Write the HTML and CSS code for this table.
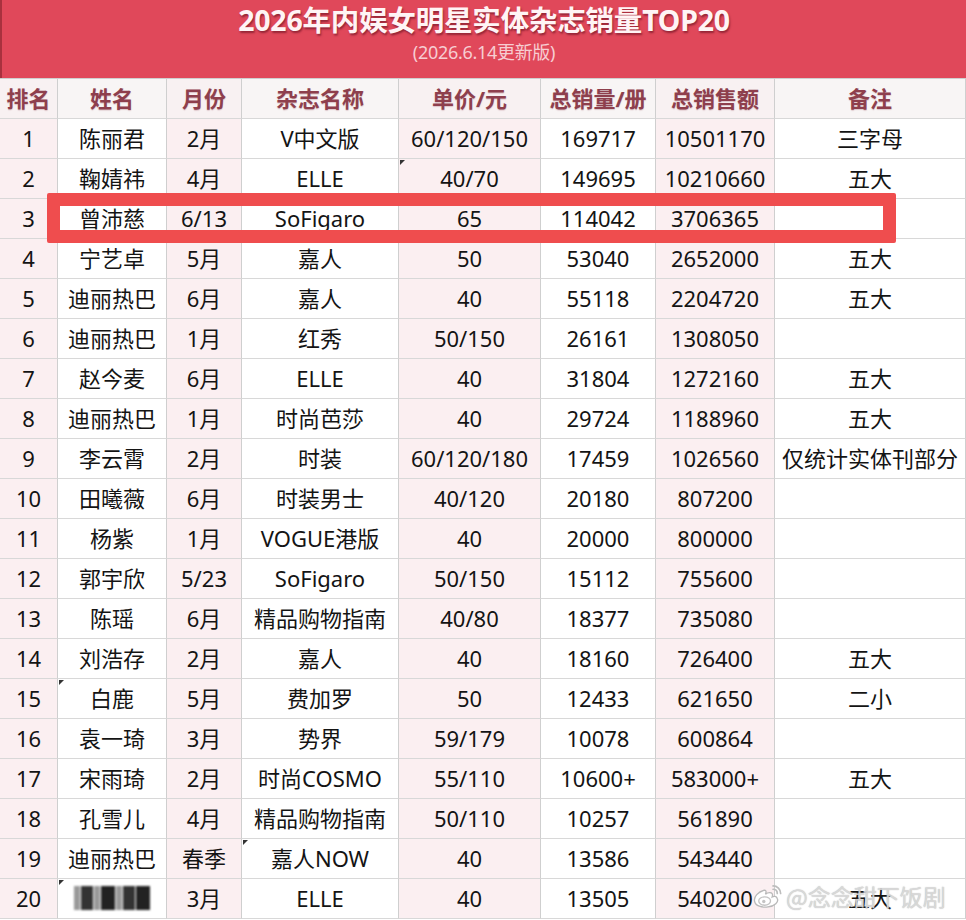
FILE: index.html
```html
<!DOCTYPE html>
<html lang="zh-CN">
<head>
<meta charset="utf-8">
<title>2026年内娱女明星实体杂志销量TOP20</title>
<link rel="stylesheet" href="styles.css">
</head>
<body>
<div class="page">
  <header class="banner">
    <h1 class="title">2026年内娱女明星实体杂志销量TOP20</h1>
    <div class="subtitle">(2026.6.14更新版)</div>
  </header>
  <div class="table">
    <div class="c h t">排名</div><div class="c h">姓名</div><div class="c h t">月份</div><div class="c h">杂志名称</div><div class="c h t">单价/元</div><div class="c h">总销量/册</div><div class="c h t">总销售额</div><div class="c h">备注</div>

    <div class="c t">1</div><div class="c">陈丽君</div><div class="c t">2月</div><div class="c">V中文版</div><div class="c t">60/120/150</div><div class="c">169717</div><div class="c t">10501170</div><div class="c">三字母</div>
    <div class="c t">2</div><div class="c">鞠婧祎</div><div class="c t">4月</div><div class="c">ELLE</div><div class="c t mark">40/70</div><div class="c">149695</div><div class="c t">10210660</div><div class="c">五大</div>
    <div class="c t">3</div><div class="c">曾沛慈</div><div class="c t">6/13</div><div class="c">SoFigaro</div><div class="c t">65</div><div class="c">114042</div><div class="c t">3706365</div><div class="c"></div>
    <div class="c t">4</div><div class="c">宁艺卓</div><div class="c t">5月</div><div class="c">嘉人</div><div class="c t">50</div><div class="c">53040</div><div class="c t">2652000</div><div class="c">五大</div>
    <div class="c t">5</div><div class="c">迪丽热巴</div><div class="c t">6月</div><div class="c">嘉人</div><div class="c t">40</div><div class="c">55118</div><div class="c t">2204720</div><div class="c">五大</div>
    <div class="c t">6</div><div class="c">迪丽热巴</div><div class="c t">1月</div><div class="c">红秀</div><div class="c t">50/150</div><div class="c">26161</div><div class="c t">1308050</div><div class="c"></div>
    <div class="c t">7</div><div class="c">赵今麦</div><div class="c t">6月</div><div class="c">ELLE</div><div class="c t">40</div><div class="c">31804</div><div class="c t">1272160</div><div class="c">五大</div>
    <div class="c t">8</div><div class="c">迪丽热巴</div><div class="c t">1月</div><div class="c">时尚芭莎</div><div class="c t">40</div><div class="c">29724</div><div class="c t">1188960</div><div class="c">五大</div>
    <div class="c t">9</div><div class="c">李云霄</div><div class="c t">2月</div><div class="c">时装</div><div class="c t">60/120/180</div><div class="c">17459</div><div class="c t">1026560</div><div class="c">仅统计实体刊部分</div>
    <div class="c t">10</div><div class="c">田曦薇</div><div class="c t">6月</div><div class="c">时装男士</div><div class="c t">40/120</div><div class="c">20180</div><div class="c t">807200</div><div class="c"></div>
    <div class="c t">11</div><div class="c">杨紫</div><div class="c t">1月</div><div class="c">VOGUE港版</div><div class="c t">40</div><div class="c">20000</div><div class="c t">800000</div><div class="c"></div>
    <div class="c t">12</div><div class="c">郭宇欣</div><div class="c t">5/23</div><div class="c">SoFigaro</div><div class="c t">50/150</div><div class="c">15112</div><div class="c t">755600</div><div class="c"></div>
    <div class="c t">13</div><div class="c">陈瑶</div><div class="c t">6月</div><div class="c">精品购物指南</div><div class="c t">40/80</div><div class="c">18377</div><div class="c t">735080</div><div class="c"></div>
    <div class="c t">14</div><div class="c">刘浩存</div><div class="c t">2月</div><div class="c">嘉人</div><div class="c t">40</div><div class="c">18160</div><div class="c t">726400</div><div class="c">五大</div>
    <div class="c t">15</div><div class="c mark">白鹿</div><div class="c t">5月</div><div class="c">费加罗</div><div class="c t">50</div><div class="c">12433</div><div class="c t">621650</div><div class="c">二小</div>
    <div class="c t">16</div><div class="c">袁一琦</div><div class="c t">3月</div><div class="c">势界</div><div class="c t">59/179</div><div class="c">10078</div><div class="c t">600864</div><div class="c"></div>
    <div class="c t">17</div><div class="c">宋雨琦</div><div class="c t">2月</div><div class="c">时尚COSMO</div><div class="c t">55/110</div><div class="c">10600+</div><div class="c t">583000+</div><div class="c">五大</div>
    <div class="c t">18</div><div class="c">孔雪儿</div><div class="c t">4月</div><div class="c">精品购物指南</div><div class="c t">50/110</div><div class="c">10257</div><div class="c t">561890</div><div class="c"></div>
    <div class="c t">19</div><div class="c">迪丽热巴</div><div class="c t">春季</div><div class="c mark">嘉人NOW</div><div class="c t">40</div><div class="c">13586</div><div class="c t">543440</div><div class="c"></div>
    <div class="c t">20</div><div class="c mark"><span class="blur"><i class="w"></i><i></i><i class="w"></i><i class="d"></i><i class="w"></i><i></i><i class="d"></i></span></div><div class="c t">3月</div><div class="c">ELLE</div><div class="c t">40</div><div class="c">13505</div><div class="c t">540200</div><div class="c">五大</div>
  </div>
  <div class="highlight"></div>
  <div class="watermark">
    <svg class="weibo" width="32" height="30" viewBox="0 0 38 30">
      <path d="M15 8 C7 10 2 16 3 21 C4 27 12 29 19 28 C27 27 32 22 30 18 C29 15 26 15 24 16 C25 13 24 11 21 11 C19 11 17 12 16 13 C17 10 17 8 15 8 Z" fill="#fff" stroke="#b9b9b9" stroke-width="1.6"/>
      <ellipse cx="15" cy="21" rx="7" ry="5" fill="none" stroke="#c4c4c4" stroke-width="1.6"/>
      <circle cx="14" cy="21.5" r="2" fill="#c4c4c4"/>
      <path d="M25 3 C30 3 34 7 34 12" fill="none" stroke="#bdbdbd" stroke-width="2" stroke-linecap="round"/>
      <path d="M25 7 C28 7 30 9 30 12" fill="none" stroke="#bdbdbd" stroke-width="2" stroke-linecap="round"/>
    </svg>
    <span class="wm-text">@念念甜下饭剧</span>
  </div>
</div>
</body>
</html>
```
FILE: styles.css
```css
* { box-sizing: border-box; }
html, body { margin: 0; padding: 0; background: #fff; }
body {
  font-family: "Noto Sans", "Noto Sans CJK SC", sans-serif;
  color: #111;
}
.page {
  position: relative;
  width: 966px;
  height: 920px;
  overflow: hidden;
}
.banner {
  height: 78px;
  background: #e0485a;
  border-left: 2px solid #a8313e;
  display: flex;
  flex-direction: column;
  align-items: center;
  padding-top: 1px;
}
.title {
  margin: 0;
  font-size: 28.5px;
  line-height: 38px;
  font-weight: 700;
  color: #fff4f5;
  letter-spacing: -0.2px;
  text-shadow: 1px 2px 2px rgba(90, 10, 25, 0.55);
}
.subtitle {
  margin-top: -2px;
  font-size: 18px;
  line-height: 30px;
  color: #f7cdd2;
  letter-spacing: -0.3px;
}
.table {
  display: grid;
  grid-template-columns: 58px 109px 75px 157px 142px 115px 119px 191px;
  grid-auto-rows: 40px;
  border-top: 1px solid #cfcfcf;
}
.c {
  position: relative;
  display: flex;
  align-items: center;
  justify-content: center;
  border-right: 1px solid #cfcfcf;
  border-bottom: 1px solid #d8d8d8;
  font-size: 22px;
  line-height: 1;
  color: #141414;
  white-space: nowrap;
  padding-bottom: 2px;
}
.c.t { background: #fbeff1; }
.c.h {
  font-weight: 700;
  font-size: 22px;
  color: #8e3f4d;
  text-shadow: 0 1px 1px rgba(140, 60, 75, 0.25);
  background: #f8f5f5;
}
.c.h.t { background: #f8f1f2; }
.mark::before {
  content: "";
  position: absolute;
  left: 1px;
  top: 1px;
  border-top: 5px solid #333;
  border-right: 5px solid transparent;
}
.blur {
  display: flex;
  align-items: stretch;
  height: 24px;
  gap: 1px;
  filter: blur(1.2px);
}
.blur i { display: block; width: 12px; background: #333; }
.blur i.w { width: 6px; background: #999; }
.blur i.d { width: 14px; background: #222; }
.highlight {
  position: absolute;
  left: 47px;
  top: 193px;
  width: 849px;
  height: 50px;
  border: 13px solid #ef4d4e;
  border-radius: 2px;
}
.watermark {
  position: absolute;
  left: 752px;
  top: 881px;
  display: flex;
  align-items: center;
  gap: 2px;
  white-space: nowrap;
}
.wm-text {
  font-family: "Noto Sans CJK SC", sans-serif;
  font-size: 23px;
  line-height: 30px;
  color: rgba(228, 228, 228, 0.75);
  text-shadow: 0 0 1px rgba(150, 150, 150, 0.8);
}
```
